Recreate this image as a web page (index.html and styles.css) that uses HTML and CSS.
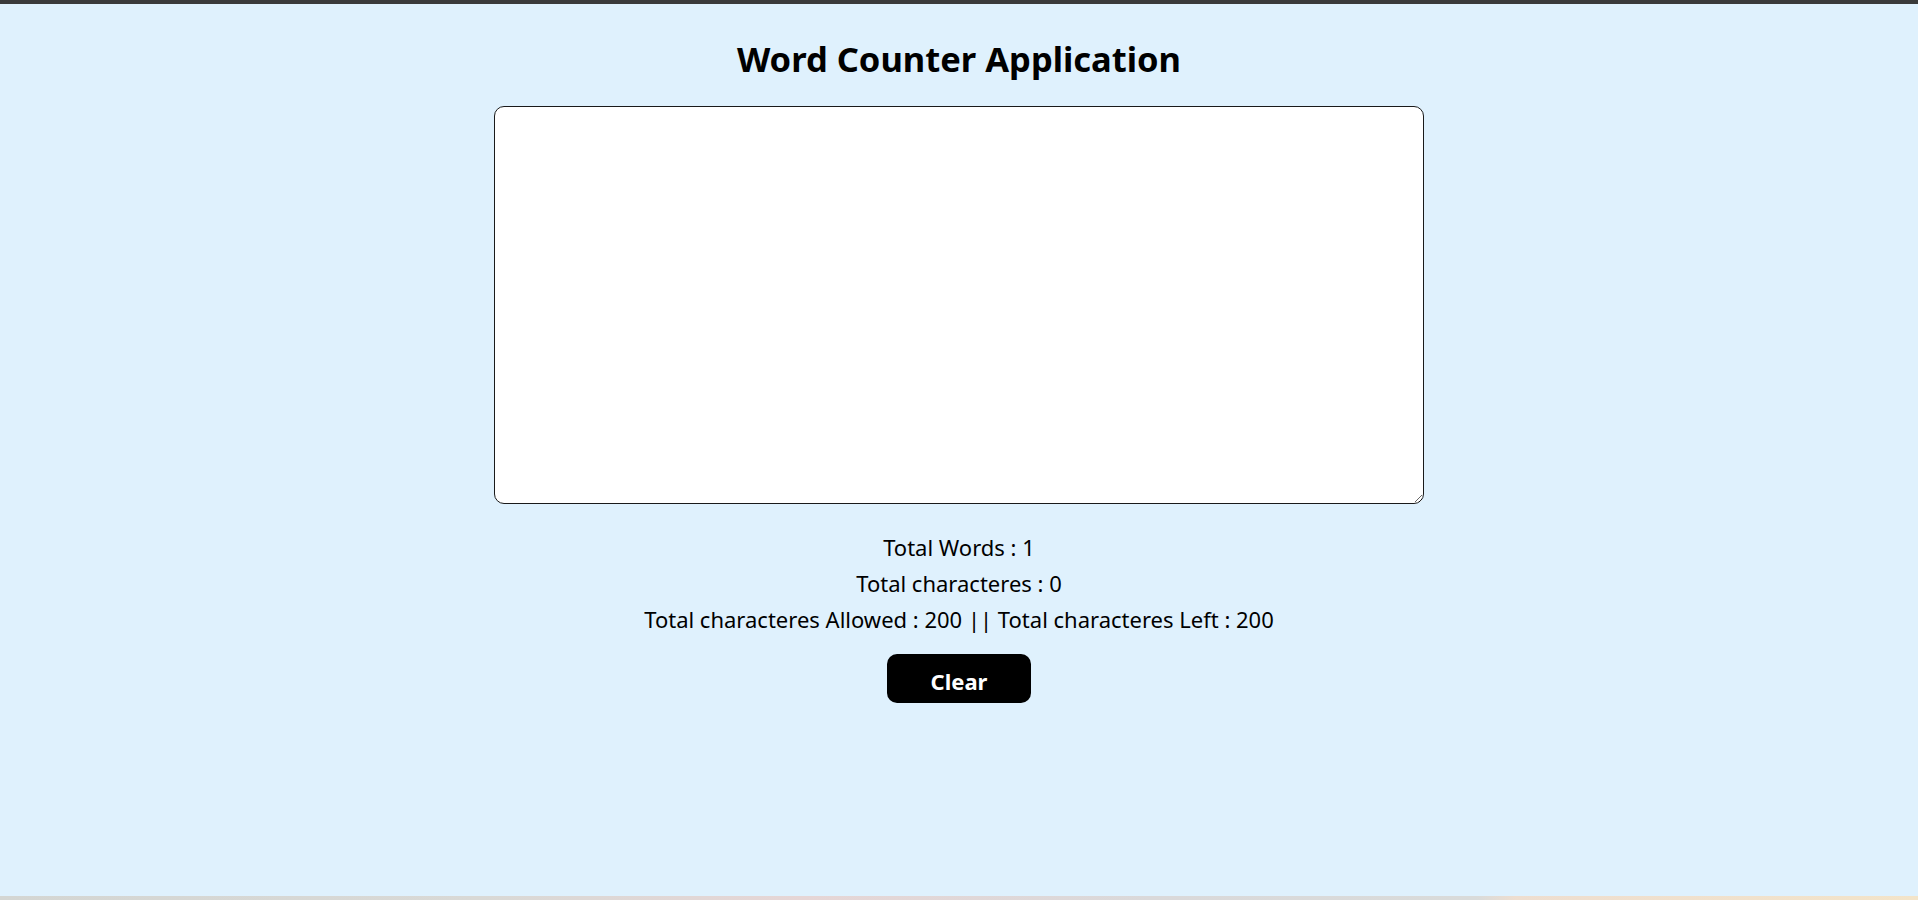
FILE: index.html
```html
<!DOCTYPE html>
<html lang="en">
<head>
<meta charset="utf-8">
<title>Word Counter Application</title>
<link rel="stylesheet" href="styles.css">
</head>
<body>
<div class="topbar"></div>
<main class="app">
  <h1 class="title">Word Counter Application</h1>
  <textarea class="editor"></textarea>
  <div class="stats">
    <p class="stat">Total Words : 1</p>
    <p class="stat">Total characteres : 0</p>
    <p class="stat">Total characteres Allowed : 200 || Total characteres Left : 200</p>
  </div>
  <button class="clear-btn" type="button">Clear</button>
</main>
<div class="bottombar"></div>
</body>
</html>
```

FILE: styles.css
```css
html, body {
  margin: 0;
  padding: 0;
}
body {
  min-height: 100vh;
  display: flex;
  flex-direction: column;
  background: #dff1fd;
  font-family: "Noto Sans", "Open Sans", sans-serif;
  color: #000;
}
.topbar {
  height: 4px;
  background: #3a3a3a;
  flex: none;
}
.app {
  flex: 1;
  display: flex;
  flex-direction: column;
  align-items: center;
  padding-top: 38px;
}
.title {
  margin: 0;
  font-size: 34.5px;
  line-height: 34px;
  font-weight: 700;
}
.editor {
  margin-top: 30px;
  width: 930px;
  height: 398px;
  box-sizing: border-box;
  border: 1px solid #1a1a1a;
  border-radius: 10px;
  background: #fff;
  padding: 8px;
  font-family: inherit;
  font-size: 16px;
  outline: none;
}
.stats {
  margin-top: 25px;
  text-align: center;
}
.stat {
  margin: 0;
  font-size: 22px;
  line-height: 36px;
}
.clear-btn {
  margin-top: 17px;
  width: 144px;
  height: 49px;
  box-sizing: border-box;
  padding: 4px 0 0;
  border: none;
  border-radius: 10px;
  background: #000;
  color: #fff;
  font-family: inherit;
  font-size: 22px;
  font-weight: 700;
  cursor: pointer;
}
.bottombar {
  height: 4px;
  flex: none;
  background: linear-gradient(to right, #d4d6d3 0%, #d9d9d6 25%, #e6d6d6 42%, #dad9da 60%, #d9dbda 77%, #eeded0 79%, #f3e4c9 100%);
}
```
